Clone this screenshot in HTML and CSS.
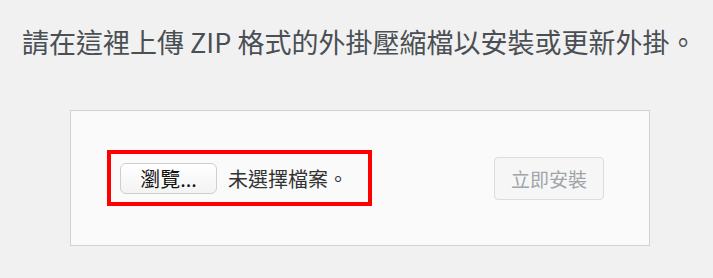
FILE: index.html
```html
<!DOCTYPE html>
<html lang="zh-Hant">
<head>
<meta charset="utf-8">
<link rel="stylesheet" href="styles.css">
</head>
<body>
<p class="intro">請在這裡上傳 ZIP 格式的外掛壓縮檔以安裝或更新外掛。</p>
<form class="upload">
  <div class="file-field">
    <span class="browse">瀏覽...</span>
    <span class="no-file">未選擇檔案。</span>
  </div>
  <button type="button" class="install" disabled>立即安裝</button>
</form>
</body>
</html>
```
FILE: styles.css
```css
html, body {
  margin: 0;
  padding: 0;
  background: #f1f1f1;
}
body {
  font-family: "Noto Sans CJK TC", "Noto Sans", sans-serif;
  width: 713px;
  height: 278px;
  overflow: hidden;
}
.intro {
  margin: 0;
  padding: 24px 0 0 22px;
  font-size: 27px;
  line-height: 36px;
  color: #4a4f54;
  white-space: nowrap;
}
.upload {
  box-sizing: border-box;
  margin: 50px 0 0 70px;
  width: 580px;
  height: 136px;
  background: #fafafa;
  border: 1px solid #d2d2d2;
  display: flex;
  align-items: center;
  justify-content: space-between;
  padding: 0 45px 0 36px;
}
.file-field {
  box-sizing: border-box;
  width: 265px;
  height: 56px;
  border: 4px solid #ff0000;
  padding-left: 9px;
  display: flex;
  align-items: center;
  gap: 11px;
}
.browse {
  box-sizing: border-box;
  width: 97px;
  height: 31px;
  border: 1px solid #cfcfcf;
  border-radius: 6px;
  background: linear-gradient(#ffffff, #f3f3f3);
  font-size: 20px;
  line-height: 29px;
  color: #111;
  text-align: center;
}
.no-file {
  font-size: 20px;
  color: #333;
}
.install {
  box-sizing: border-box;
  width: 110px;
  height: 43px;
  border: 1px solid #dcdcdc;
  border-radius: 4px;
  background: #f6f6f6;
  color: #a0a5aa;
  font-family: inherit;
  font-size: 19px;
  padding: 0;
}
```
